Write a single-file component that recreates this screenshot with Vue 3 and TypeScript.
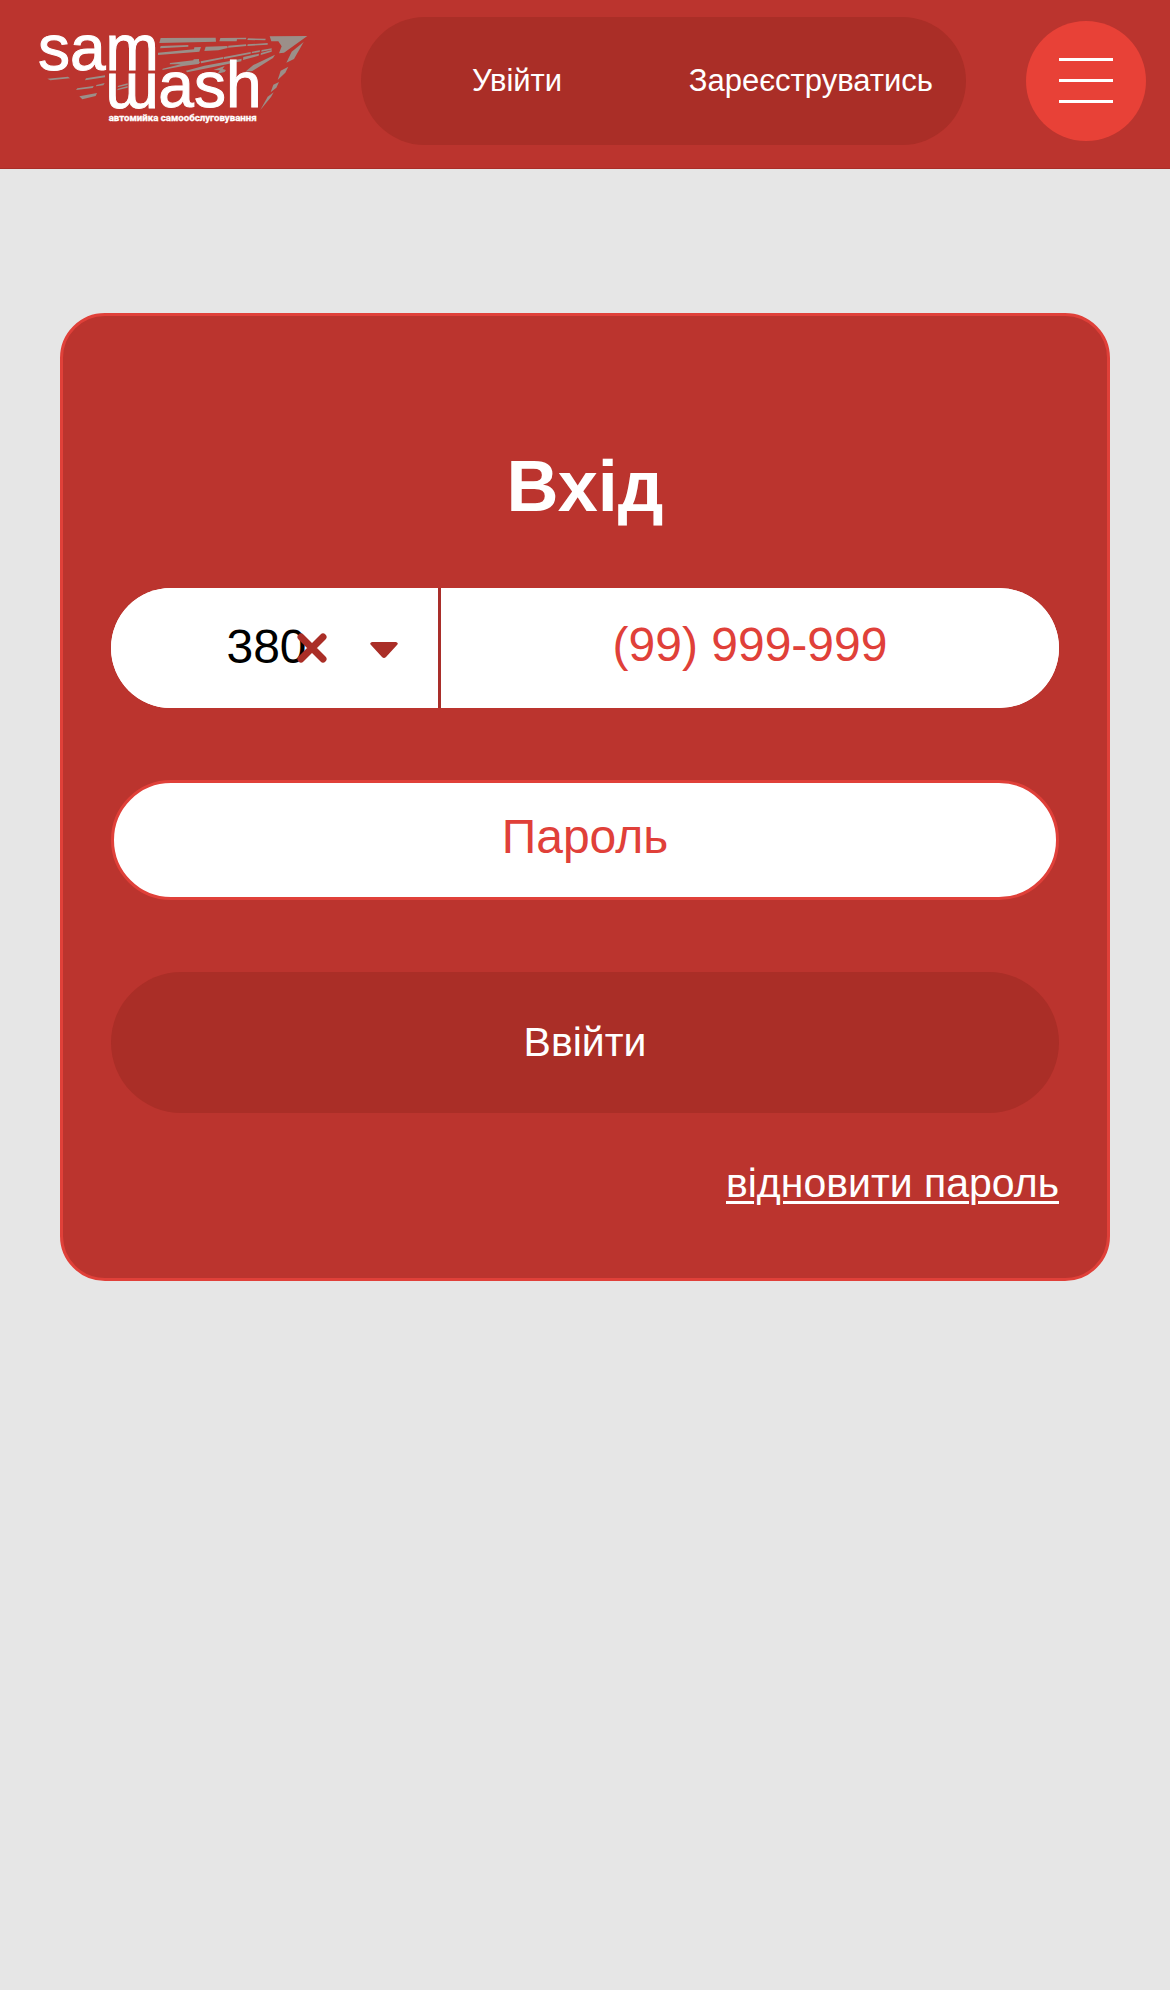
<script setup lang="ts">
import { ref } from 'vue'

const code = ref('380')
const phone = ref('')
const password = ref('')
</script>

<template>
  <div class="page">
    <header class="header">
      <a class="logo" href="#" aria-label="sam wash">
        <svg viewBox="108 102 822 282" role="img" aria-hidden="true">
          <g fill="#9b8f89">
            <path d="M482 114L647 113L648 125L478 129Z" />
            <path d="M661 114L739 113L738 118L711 118L710 124L658 124Z" />
            <path d="M744 115L797 116L796 121L742 120Z" />
            <path d="M482 138L565 135V140L480 145Z" />
            <path d="M474 158L582 148L583 142L603 141L598 155L474 165Z" />
            <path d="M617 140L682 138L683 144L655 151L613 153Z" />
            <path d="M685 137L738 133L739 138L684 143Z" />
            <path d="M743 133L803 129V134L742 138Z" />
            <path d="M510 189L580 181L581 178L597 177V184L600 187L596 192L550 198L487 210L488 206L542 193L509 193Z" />
            <path d="M602 184L670 171V176L603 190Z" />
            <path d="M672 171L752 156V161L672 177Z" />
            <path d="M558 212L613 197L678 185L725 176L724 184L640 201L561 217Z" />
            <path d="M730 171L777 161L776 167L729 180Z" />
            <path d="M756 155L780 151L779 156L755 160Z" />
            <path d="M785 150L815 145V149L784 155Z" />
            <path d="M783 159L815 150V155L782 165Z" />
            <path d="M640 210L674 198L668 207L678 210L674 216L652 221L660 211Z" />
            <path d="M760 195L825 164L819 174L757 213L736 215Z" />
            <path d="M809 109L922 108L852 158L837 160L845 139L835 124H814Z" />
            <path d="M911 126L882 177L859 188L875 155Z" />
            <path d="M865 200L856 218L833 240L842 212Z" />
            <path d="M837 246L829 263L812 277L820 254Z" />
            <path d="M821 277L813 291L781 330L803 290Z" />
            <path d="M142 236L204 230L210 235L151 241Z" />
            <path d="M258 235L315 226V232L255 241Z" />
            <path d="M232 265L281 258L278 264L228 270Z" />
            <path d="M289 255L314 249L310 256L288 259Z" />
            <path d="M238 289L291 279L287 288L247 298Z" />
            <path d="M355 257L383 250V255L352 262Z" />
            <path d="M354 266L383 258V263L351 271Z" />
          </g>
          <g class="word">
            <text x="114" y="210">sam</text>
            <text x="-476" y="-223" transform="rotate(180)">m</text>
            <text x="475" y="322">ash</text>
          </g>
          <text class="tagline" x="326" y="364">автомийка самообслуговування</text>
        </svg>
      </a>
      <nav class="account">
        <a href="#">Увійти</a>
        <a href="#">Зареєструватись</a>
      </nav>
      <button class="menu" type="button" aria-label="Меню">
        <span></span>
        <span></span>
        <span></span>
      </button>
    </header>

    <main>
      <form class="card" @submit.prevent>
        <h1>Вхід</h1>
        <div class="phone">
          <div class="code">
            <input v-model="code" type="text" aria-label="Код країни" />
            <button class="clear" type="button" aria-label="Очистити" @click="code = ''">
              <svg viewBox="0 0 30 30"><path d="M4 4L26 26M26 4L4 26" /></svg>
            </button>
            <button class="open" type="button" aria-label="Обрати код">
              <svg viewBox="0 0 28 16"><path d="M2 0H26Q29 1 27 3L16 15Q14 17 12 15L1 3Q-1 1 2 0Z" /></svg>
            </button>
          </div>
          <input v-model="phone" class="number" type="tel" placeholder="(99) 999-999" aria-label="Телефон" />
        </div>
        <input v-model="password" class="password" type="password" placeholder="Пароль" aria-label="Пароль" />
        <button class="submit" type="submit">Ввійти</button>
        <a class="restore" href="#">відновити пароль</a>
      </form>
    </main>
  </div>
</template>

<style>
body {
  background: #e6e6e6;
}
</style>

<style scoped>
.page,
.page input,
.page button {
  font-family: "Liberation Sans", Arial, sans-serif;
}

.page * {
  box-sizing: border-box;
}

.header {
  display: flex;
  align-items: center;
  padding: 17px 24px 23px 36px;
  background: #bb342e;
  border-bottom: 1px solid #a92e28;
}

.logo {
  flex: 0 0 274px;
}

.logo svg {
  display: block;
  width: 100%;
  overflow: visible;
}

.word {
  fill: #fff;
  stroke: #fff;
  stroke-width: 3px;
  font-size: 192px;
}

.tagline {
  fill: #fff;
  stroke: #fff;
  stroke-width: 1px;
  font-family: Roboto, "Liberation Sans", sans-serif;
  font-size: 29px;
  font-weight: 700;
}

.account {
  flex: 1;
  display: flex;
  align-items: center;
  justify-content: space-between;
  height: 128px;
  margin: 0 60px 0 51px;
  padding: 0 33px 0 111px;
  border-radius: 64px;
  background: #aa2e27;
}

.account a {
  color: #fff;
  font-size: 31px;
  line-height: 36px;
  text-decoration: none;
}

.menu {
  flex: none;
  display: flex;
  flex-direction: column;
  align-items: center;
  justify-content: center;
  gap: 18px;
  width: 120px;
  height: 120px;
  padding: 0 0 1px;
  border: 0;
  border-radius: 50%;
  background: #e84137;
}

.menu span {
  width: 54px;
  height: 3px;
  background: #fff;
}

.card {
  display: flex;
  flex-direction: column;
  margin: 144px 60px;
  padding: 129px 48px 72px;
  border: 3px solid #e04039;
  border-radius: 45px;
  background: #bb342e;
}

h1 {
  margin: 0 0 61px;
  color: #fff;
  font-size: 72px;
  line-height: 82px;
  text-align: center;
}

.phone {
  display: flex;
  height: 120px;
  margin-bottom: 72px;
  overflow: hidden;
  border-radius: 60px;
  background: #fff;
}

.code {
  position: relative;
  flex: 0 0 330px;
  border-right: 3px solid #a92e2a;
}

.card input {
  width: 100%;
  height: 120px;
  padding: 0 0 8px;
  border: 0;
  outline: 0;
  background: #fff;
  color: #000;
  font-size: 48px;
  text-align: center;
}

.card .code input {
  padding: 0 16px 4px 0;
}

.card .number {
  flex: 1;
  min-width: 0;
}

.card input::placeholder {
  color: #e04039;
  opacity: 1;
}

.clear,
.open {
  position: absolute;
  top: 0;
  display: grid;
  place-items: center;
  height: 120px;
  padding: 0;
  border: 0;
  background: none;
}

.clear {
  right: 111px;
}

.open {
  right: 40px;
  padding-top: 4px;
}

.clear svg {
  width: 30px;
  fill: none;
  stroke: #aa2e27;
  stroke-width: 7px;
  stroke-linecap: round;
}

.open svg {
  width: 28px;
  fill: #aa2e27;
}

.card .password {
  margin-bottom: 72px;
  border: 3px solid #e04039;
  border-radius: 60px;
}

.submit {
  height: 141px;
  margin-bottom: 47px;
  padding: 0;
  border: 0;
  border-radius: 71px;
  background: #aa2e27;
  color: #fff;
  font-size: 41px;
}

.restore {
  align-self: flex-end;
  color: #fff;
  font-size: 41px;
  line-height: 46px;
  text-decoration-thickness: 3px;
  text-underline-offset: 4px;
}
</style>
